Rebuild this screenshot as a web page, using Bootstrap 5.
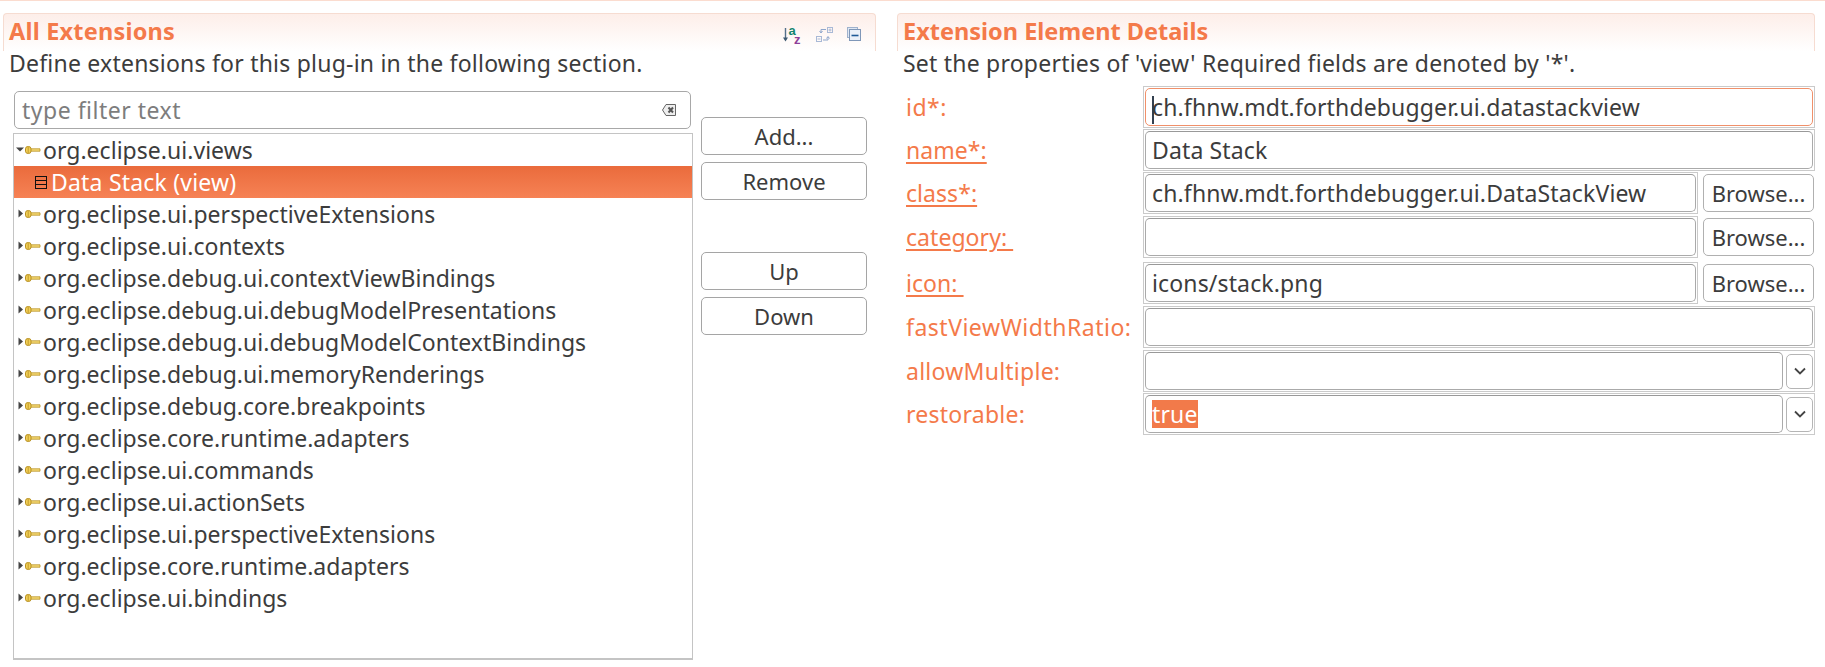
<!DOCTYPE html>
<html lang="en">
<head>
<meta charset="utf-8">
<title>All Extensions</title>
<link href="https://cdn.jsdelivr.net/npm/bootstrap@5.3.0/dist/css/bootstrap.min.css" rel="stylesheet">
<style>
html,body{height:667px;overflow:hidden}
body{background:#fff;color:#3c3c3c;font-family:"Noto Sans","Open Sans",sans-serif;font-size:23px;line-height:26px}
.top-rule{height:1px;background:#fbdccf}
.pane-wrap{padding-top:12px}
.pane-left{width:873px;margin-left:3px}
.pane-right{width:918px;margin-left:21px}
.sec-head{height:38px;border:1px solid #f6dcd1;border-bottom:0;border-radius:4px 4px 0 0;background:linear-gradient(#fdeee9,#fff);padding:2px 5px;color:#f47a4a;font-weight:700;font-size:23.5px;line-height:30px}
.pane-left .sec-head>span{letter-spacing:.2px}
.sec-icons{gap:14px;padding:11px 9px 0 0}
.sec-icons svg{overflow:visible}
.sec-desc{padding-left:6px;height:30px;line-height:26px;margin-top:-1px;letter-spacing:.22px;white-space:nowrap}
.filter-box{margin:11px 0 4px 11px;width:677px;height:38px;border:1px solid #a8a8a8;border-radius:5px;padding:0 14px 0 7px;color:#7d7d7d;letter-spacing:.5px}
.tree-box{margin-left:10px;width:680px;height:527px;border:1px solid #c4c4c4;border-bottom-width:2px}
.tree-row{height:32px;padding-left:2px;gap:2px;white-space:nowrap;line-height:30px;letter-spacing:.03px}
.tree-row.is-sel{background:linear-gradient(#ea6b3c,#f68255);color:#fff;padding-left:21px;gap:4px;letter-spacing:.2px}
.btn-col{width:166px;margin:37px 0 0 8px;gap:7px}
.act-btn{height:38px;padding:0;background:#fff;border:1px solid #a5a5a5;border-radius:5px;color:#3c3c3c;font-size:22px;line-height:34px}
.act-btn:hover{background:#fff;color:#3c3c3c;border-color:#a5a5a5}
.btn-gap{margin-top:45px}
.fields{margin-top:6px}
.fld-row{height:42px;margin-bottom:1px;width:918px}
.fld-row.sp2{margin-bottom:2px}
.fld-row.sp4{margin-bottom:4px}
.fld-label{width:246px;padding-left:9px;color:#f47a4a;white-space:nowrap;line-height:26px;letter-spacing:.5px}
.fld-label a{color:#f47a4a;text-decoration:underline;text-underline-offset:3px;white-space:pre;letter-spacing:.05px}
.fld-label.lbl-tight{letter-spacing:.25px}
.fld-outer{flex:1;border:1px solid #cacaca;padding:1px;height:100%;min-width:0}
.fld-inner{height:100%;border:1px solid #aaa;border-top-color:#999;border-radius:5px;padding:0 6px;line-height:37px;white-space:nowrap;background:#fff;letter-spacing:.14px}
.fld-inner.is-focus{border-color:#f0906a}
.caret-mark{display:inline-block;width:2px;height:28px;background:#33404f;vertical-align:middle;margin-right:-2px}
.pick-btn{width:111px;height:38px;margin:0 1px 0 5px;padding:0;background:#fff;border:1px solid #b0b0b0;border-radius:5px;color:#3c3c3c;font-size:22px;line-height:34px;flex:none}
.pick-btn:hover{background:#fff;color:#3c3c3c;border-color:#b0b0b0}
.combo-arrow{width:27px;height:35px;margin-left:3px;border:1px solid #b5b5b5;border-radius:5px;background:#fff;flex:none}
.sel-text{background:#f27a4a;color:#fff;display:inline-block;line-height:28px;height:28px}
</style>
</head>
<body>
<div class="top-rule"></div>
<div class="pane-wrap d-flex">
  <section class="pane-left">
    <div class="sec-head d-flex justify-content-between">
      <span>All Extensions</span>
      <div class="sec-icons d-flex align-items-start">
        <svg width="19" height="17" viewBox="0 0 19 17"><path d="M2.500 1v12" stroke="#54708a" stroke-width="1.400"/><path d="M0 10.500h5l-2.500 4z" fill="#3f5a72"/><text x="5.500" y="8" font-family="Liberation Sans" font-weight="700" font-size="13" fill="#14856f">a</text><text x="11" y="16.500" font-family="Liberation Sans" font-weight="700" font-size="13" fill="#8e3f98">z</text></svg>
        <svg width="17" height="16" viewBox="0 0 17 16" fill="none" stroke="#a9b9d6"><rect x="11.500" y=".5" width="5" height="5"/><path d="M12.500 3h3M14 1.500v3"/><rect x=".5" y="9.500" width="5" height="5"/><path d="M1.500 12h3"/><path d="M10 2.500H5v3M3.500 4l1.500 2 1.500-2M7 13h5v-3M10.500 11.500L12 9.500l1.500 2" stroke="#8ea6cc"/></svg>
        <svg width="14" height="14" viewBox="0 0 14 14" fill="none"><rect x=".5" y=".5" width="10" height="10" fill="#dfe7f3" stroke="#9fb2cd"/><rect x="2.500" y="2.500" width="11" height="11" fill="#eaf0f8" stroke="#7f97b8"/><path d="M4.500 8.500h7" stroke="#1f5a96" stroke-width="1.600"/></svg>
      </div>
    </div>
    <div class="sec-desc">Define extensions for this plug-in in the following section.</div>
    <div class="d-flex">
      <div>
        <div class="filter-box d-flex align-items-center justify-content-between">
          <span>type filter text</span>
          <svg width="14" height="12" viewBox="0 0 14 12"><path d="M4 .5h9.500v11H4L.5 6z" fill="#eee" stroke="#666"/><path d="M6.500 3.500l4.500 5M11 3.500l-4.500 5" stroke="#555" stroke-width="2"/></svg>
        </div>
        <div class="tree-box" id="tree">
          <div class="tree-row d-flex align-items-center"><svg width="25" height="10" viewBox="0 0 25 10"><path d="M0 2.500h8L4 6.500z" fill="#444"/><use href="#keyg"/></svg><span>org.eclipse.ui.views</span></div>
          <div class="tree-row is-sel d-flex align-items-center"><svg width="12" height="13" viewBox="0 0 12 13" fill="none" stroke="#111"><rect x=".5" y=".5" width="11" height="12"/><path d="M.5 4.500h11M.5 8.500h11"/></svg><span>Data Stack (view)</span></div>
          <div class="tree-row d-flex align-items-center"><svg width="25" height="10" viewBox="0 0 25 10"><path d="M2.500 .5v8l4.500-4z" fill="#444"/><use href="#keyg"/></svg><span>org.eclipse.ui.perspectiveExtensions</span></div>
          <div class="tree-row d-flex align-items-center"><svg width="25" height="10" viewBox="0 0 25 10"><path d="M2.500 .5v8l4.500-4z" fill="#444"/><use href="#keyg"/></svg><span>org.eclipse.ui.contexts</span></div>
          <div class="tree-row d-flex align-items-center"><svg width="25" height="10" viewBox="0 0 25 10"><path d="M2.500 .5v8l4.500-4z" fill="#444"/><use href="#keyg"/></svg><span>org.eclipse.debug.ui.contextViewBindings</span></div>
          <div class="tree-row d-flex align-items-center"><svg width="25" height="10" viewBox="0 0 25 10"><path d="M2.500 .5v8l4.500-4z" fill="#444"/><use href="#keyg"/></svg><span>org.eclipse.debug.ui.debugModelPresentations</span></div>
          <div class="tree-row d-flex align-items-center"><svg width="25" height="10" viewBox="0 0 25 10"><path d="M2.500 .5v8l4.500-4z" fill="#444"/><use href="#keyg"/></svg><span>org.eclipse.debug.ui.debugModelContextBindings</span></div>
          <div class="tree-row d-flex align-items-center"><svg width="25" height="10" viewBox="0 0 25 10"><path d="M2.500 .5v8l4.500-4z" fill="#444"/><use href="#keyg"/></svg><span>org.eclipse.debug.ui.memoryRenderings</span></div>
          <div class="tree-row d-flex align-items-center"><svg width="25" height="10" viewBox="0 0 25 10"><path d="M2.500 .5v8l4.500-4z" fill="#444"/><use href="#keyg"/></svg><span>org.eclipse.debug.core.breakpoints</span></div>
          <div class="tree-row d-flex align-items-center"><svg width="25" height="10" viewBox="0 0 25 10"><path d="M2.500 .5v8l4.500-4z" fill="#444"/><use href="#keyg"/></svg><span>org.eclipse.core.runtime.adapters</span></div>
          <div class="tree-row d-flex align-items-center"><svg width="25" height="10" viewBox="0 0 25 10"><path d="M2.500 .5v8l4.500-4z" fill="#444"/><use href="#keyg"/></svg><span>org.eclipse.ui.commands</span></div>
          <div class="tree-row d-flex align-items-center"><svg width="25" height="10" viewBox="0 0 25 10"><path d="M2.500 .5v8l4.500-4z" fill="#444"/><use href="#keyg"/></svg><span>org.eclipse.ui.actionSets</span></div>
          <div class="tree-row d-flex align-items-center"><svg width="25" height="10" viewBox="0 0 25 10"><path d="M2.500 .5v8l4.500-4z" fill="#444"/><use href="#keyg"/></svg><span>org.eclipse.ui.perspectiveExtensions</span></div>
          <div class="tree-row d-flex align-items-center"><svg width="25" height="10" viewBox="0 0 25 10"><path d="M2.500 .5v8l4.500-4z" fill="#444"/><use href="#keyg"/></svg><span>org.eclipse.core.runtime.adapters</span></div>
          <div class="tree-row d-flex align-items-center"><svg width="25" height="10" viewBox="0 0 25 10"><path d="M2.500 .5v8l4.500-4z" fill="#444"/><use href="#keyg"/></svg><span>org.eclipse.ui.bindings</span></div>
        </div>
      </div>
      <div class="btn-col d-flex flex-column">
        <button type="button" class="btn act-btn">Add...</button>
        <button type="button" class="btn act-btn">Remove</button>
        <button type="button" class="btn act-btn btn-gap">Up</button>
        <button type="button" class="btn act-btn">Down</button>
      </div>
    </div>
  </section>
  <section class="pane-right">
    <div class="sec-head"><span>Extension Element Details</span></div>
    <div class="sec-desc">Set the properties of 'view' Required fields are denoted by '*'.</div>
    <div class="fields">
      <div class="fld-row d-flex align-items-center"><div class="fld-label">id*:</div><div class="fld-outer"><div class="fld-inner is-focus"><span class="caret-mark"></span>ch.fhnw.mdt.forthdebugger.ui.datastackview</div></div></div>
      <div class="fld-row d-flex align-items-center"><div class="fld-label"><a href="#">name*:</a></div><div class="fld-outer"><div class="fld-inner">Data Stack</div></div></div>
      <div class="fld-row sp2 d-flex align-items-center"><div class="fld-label"><a href="#">class*:</a></div><div class="fld-outer"><div class="fld-inner">ch.fhnw.mdt.forthdebugger.ui.DataStackView</div></div><button type="button" class="btn pick-btn">Browse...</button></div>
      <div class="fld-row sp4 d-flex align-items-center"><div class="fld-label"><a href="#">category: </a></div><div class="fld-outer"><div class="fld-inner"></div></div><button type="button" class="btn pick-btn">Browse...</button></div>
      <div class="fld-row sp2 d-flex align-items-center"><div class="fld-label"><a href="#">icon: </a></div><div class="fld-outer"><div class="fld-inner">icons/stack.png</div></div><button type="button" class="btn pick-btn">Browse...</button></div>
      <div class="fld-row sp2 d-flex align-items-center"><div class="fld-label">fastViewWidthRatio:</div><div class="fld-outer"><div class="fld-inner"></div></div></div>
      <div class="fld-row d-flex align-items-center"><div class="fld-label lbl-tight">allowMultiple:</div><div class="fld-outer d-flex align-items-center"><div class="fld-inner flex-grow-1"></div><div class="combo-arrow d-flex align-items-center justify-content-center"><svg width="12" height="8" viewBox="0 0 12 8" fill="none" stroke="#444" stroke-width="1.800"><path d="M1 1.500l5 5 5-5"/></svg></div></div></div>
      <div class="fld-row d-flex align-items-center"><div class="fld-label lbl-tight">restorable:</div><div class="fld-outer d-flex align-items-center"><div class="fld-inner flex-grow-1"><span class="sel-text">true</span></div><div class="combo-arrow d-flex align-items-center justify-content-center"><svg width="12" height="8" viewBox="0 0 12 8" fill="none" stroke="#444" stroke-width="1.800"><path d="M1 1.500l5 5 5-5"/></svg></div></div></div>
    </div>
  </section>
</div>
<svg width="0" height="0" class="d-block" aria-hidden="true"><defs><g id="keyg"><path d="M14 3.800h10v2.400H14" fill="#f7dc78" stroke="#b8901f" stroke-width=".8"/><rect x="9.500" y="1.500" width="5.500" height="7" rx="2.400" fill="#f2cf58" stroke="#b8901f"/><path d="M12.200 2v6" stroke="#b8901f" stroke-width=".8"/></g></defs></svg>
</body>
</html>
